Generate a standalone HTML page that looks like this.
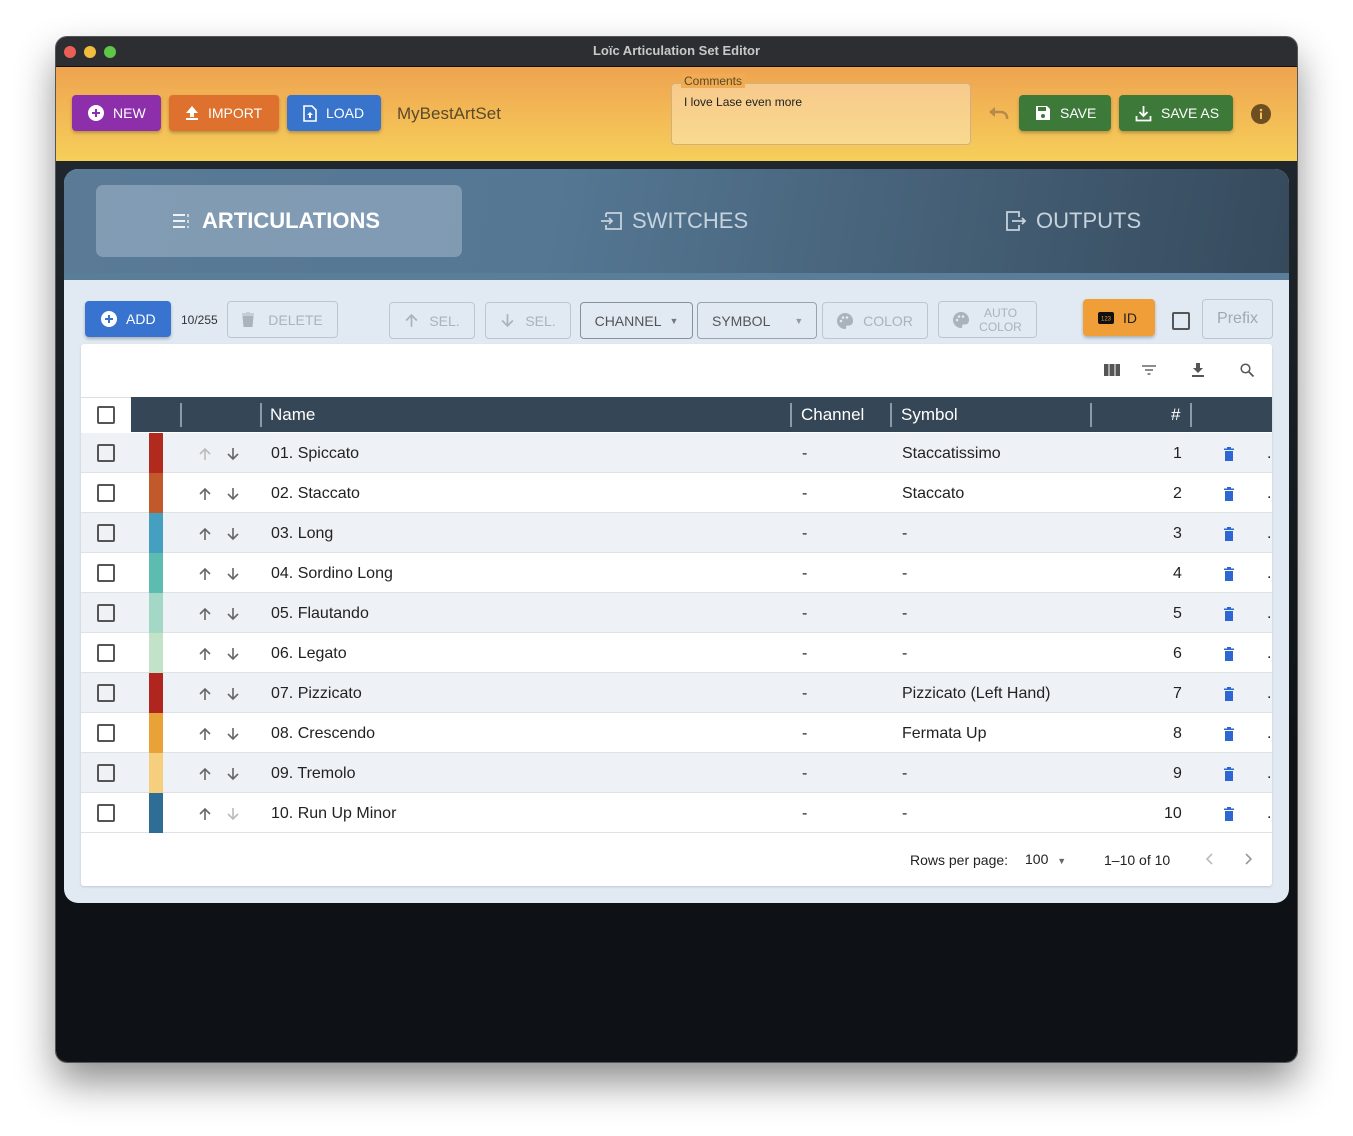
<!DOCTYPE html>
<html><head><meta charset="utf-8"><style>
*{box-sizing:border-box;margin:0;padding:0}
body{width:1353px;height:1136px;background:#fff;font-family:"Liberation Sans",Arial,sans-serif;position:relative;overflow:hidden}
.a{position:absolute}
.win{left:56px;top:37px;width:1241px;height:1025px;border-radius:11px;overflow:hidden;background:linear-gradient(#232b32,#0e1216 70%);box-shadow:0 0 0 1px #555,0 20px 40px rgba(0,0,0,.45)}
.title{left:0;top:0;width:100%;height:30px;background:#2c2e31;color:#c9c9c9;font-weight:bold;font-size:13px;text-align:center;line-height:28px;border-bottom:1px solid #111}
.dot{width:12px;height:12px;border-radius:50%;top:9px}
.tb{left:0;top:30px;width:100%;height:94px;background:linear-gradient(#efa350,#f6cf5a)}
.btn{height:36px;border-radius:4px;color:#fff;font-size:14px;display:flex;align-items:center;box-shadow:0 2px 3px rgba(0,0,0,.25);padding-left:16px}
.btn svg{margin-right:9px}
.ob{border:1px solid #bcc6cf;border-radius:4px;color:#a9b3bc;font-size:14px;display:flex;align-items:center;justify-content:center;height:37px}
.row{left:17px;width:1191px;height:40px;border-bottom:1px solid #dde2e6;font-size:16px;color:#222}
.row span{position:absolute;top:12px}
.row svg{position:absolute}
.cb{width:18px;height:18px;border:2px solid #555;border-radius:2px;position:absolute}
</style></head><body>
<svg width="0" height="0" style="position:absolute"><defs>
<symbol id="up" viewBox="0 0 14 14"><path d="M7 13V2M2 7l5-5 5 5" fill="none" stroke="currentColor" stroke-width="1.6"/></symbol>
<symbol id="dn" viewBox="0 0 14 14"><path d="M7 1v11M2 7l5 5 5-5" fill="none" stroke="currentColor" stroke-width="1.6"/></symbol>
<symbol id="tr" viewBox="0 0 10 14"><path d="M0 1.5h10v1.5H0zM3 0h4v1.5H3zM1 4h8v10H1z" fill="#2d67d1"/></symbol>
</defs></svg>
<div class="a win">
 <div class="a title">Loïc Articulation Set Editor</div>
 <div class="a dot" style="left:8px;background:#ec5f57"></div>
 <div class="a dot" style="left:28px;background:#f2bd3f"></div>
 <div class="a dot" style="left:48px;background:#5ec648"></div>
 <div class="a tb">
  <div class="a btn" style="left:16px;top:28px;width:89px;background:#8d2fab"><svg width="16" height="16" viewBox="0 0 16 16"><circle cx="8" cy="8" r="8" fill="#fff"/><path d="M8 4v8M4 8h8" stroke="#8d2fab" stroke-width="2"/></svg>NEW</div>
  <div class="a btn" style="left:113px;top:28px;width:110px;background:#dd712d"><svg width="14" height="16" viewBox="0 0 14 16"><path d="M7 1l6 7H9v4H5V8H1z" fill="#fff"/><rect x="1" y="13" width="12" height="2" fill="#fff"/></svg>IMPORT</div>
  <div class="a btn" style="left:231px;top:28px;width:94px;background:#3974cc"><svg width="14" height="17" viewBox="0 0 14 17"><path d="M1 1h8l4 4v11H1z" fill="none" stroke="#fff" stroke-width="1.6"/><path d="M7 7l3 3H8v3H6v-3H4z" fill="#fff"/></svg>LOAD</div>
  <div class="a" style="left:341px;top:37px;font-size:17px;color:#5a4a2a">MyBestArtSet</div>
  <div class="a" style="left:615px;top:16px;width:300px;height:62px;border:1px solid #d0b080;border-radius:4px;background:rgba(255,240,210,.45)"></div>
  <div class="a" style="left:625px;top:7px;font-size:12px;color:#5a4a2a;background:#f1ab52;padding:0 3px">Comments</div>
  <div class="a" style="left:628px;top:28px;font-size:12px;color:#222">I love Lase even more</div>
  <svg class="a" style="left:932px;top:39px" width="22" height="16" viewBox="0 0 22 16"><path d="M3 6h10a6 6 0 0 1 6 7" fill="none" stroke="#b88a4a" stroke-width="2.5"/><path d="M1 6l6-5v10z" fill="#b88a4a"/></svg>
  <div class="a btn" style="left:963px;top:28px;width:92px;background:#3d7a3a"><svg width="16" height="16" viewBox="0 0 16 16"><path d="M1 1h11l3 3v11H1z" fill="#fff"/><rect x="3" y="2" width="8" height="4" fill="#3d7a3a"/><circle cx="8" cy="11" r="2" fill="#3d7a3a"/></svg>SAVE</div>
  <div class="a btn" style="left:1063px;top:28px;width:114px;background:#3d7a3a"><svg width="17" height="17" viewBox="0 0 17 17"><path d="M8.5 1v10M4.5 7l4 4 4-4M1.5 11v4.5h14V11" fill="none" stroke="#fff" stroke-width="1.8"/></svg>SAVE AS</div>
  <svg class="a" style="left:1195px;top:37px" width="20" height="20" viewBox="0 0 20 20"><circle cx="10" cy="10" r="10" fill="#6d4f22"/><rect x="9" y="8.5" width="2" height="6.5" fill="#f4c35c"/><circle cx="10" cy="6" r="1.3" fill="#f4c35c"/></svg>
 </div>
 <div class="a" style="left:8px;top:132px;width:1225px;height:734px;border-radius:14px;overflow:hidden;background:#e1eaf3">
  <div class="a" style="left:0;top:0;width:100%;height:104px;background:linear-gradient(100deg,#5a7a96,#557793 40%,#364a5c)"></div>
  <div class="a" style="left:0;top:104px;width:100%;height:7px;background:#5a7d9a"></div>
  <div class="a" style="left:32px;top:16px;width:366px;height:72px;border-radius:7px;background:rgba(170,190,210,.5)"></div>
  <div class="a" style="left:108px;top:39px;font-size:22px;font-weight:bold;color:#fff;display:flex;align-items:center"><svg width="20" height="16" viewBox="0 0 20 16" style="margin-right:10px"><path d="M1 2h12M1 8h12M1 14h12" stroke="#fff" stroke-width="1.8"/><path d="M16 1v3M16 7v3M16 13v2" stroke="#fff" stroke-width="1.2"/></svg>ARTICULATIONS</div>
  <div class="a" style="left:536px;top:39px;font-size:22px;color:#c6d2dd;display:flex;align-items:center"><svg width="22" height="18" viewBox="0 0 22 18" style="margin-right:10px"><path d="M6 1h15v16H6v-4M6 5V1" fill="none" stroke="#c6d2dd" stroke-width="1.8"/><path d="M1 9h11M9 6l3 3-3 3" fill="none" stroke="#c6d2dd" stroke-width="1.8"/></svg>SWITCHES</div>
  <div class="a" style="left:941px;top:39px;font-size:22px;color:#c6d2dd;display:flex;align-items:center"><svg width="22" height="20" viewBox="0 0 22 20" style="margin-right:9px"><path d="M14 6V1H2v18h12v-5" fill="none" stroke="#c6d2dd" stroke-width="1.8"/><path d="M7 10h13M17 7l3 3-3 3" fill="none" stroke="#c6d2dd" stroke-width="1.8"/></svg>OUTPUTS</div>
  <div class="a btn" style="left:21px;top:132px;width:86px;background:#3873cf"><svg width="16" height="16" viewBox="0 0 16 16"><circle cx="8" cy="8" r="8" fill="#fff"/><path d="M8 4v8M4 8h8" stroke="#3873cf" stroke-width="2"/></svg>ADD</div>
  <div class="a" style="left:117px;top:144px;font-size:12px;color:#333">10/255</div>
  <div class="a ob" style="left:163px;top:132px;width:111px"><svg width="12" height="15" viewBox="0 0 12 15" style="margin-right:14px"><path d="M0 2h12M4 0h4M1 4h10l-1 11H2z" fill="#a9b3bc" stroke="#a9b3bc"/></svg>DELETE</div>
  <div class="a ob" style="left:325px;top:133px;width:86px"><svg width="15" height="15" style="margin-right:10px;color:#a9b3bc"><use href="#up"/></svg>SEL.</div>
  <div class="a ob" style="left:421px;top:133px;width:86px"><svg width="15" height="15" style="margin-right:10px;color:#a9b3bc"><use href="#dn"/></svg>SEL.</div>
  <div class="a ob" style="left:516px;top:133px;width:113px;border-color:#889098;color:#555">CHANNEL<span style="margin-left:8px;font-size:9px;color:#777">▼</span></div>
  <div class="a ob" style="left:633px;top:133px;width:120px;border-color:#9aa2aa;color:#555;justify-content:flex-start;padding-left:14px">SYMBOL<span style="margin-left:24px;font-size:9px;color:#999">▼</span></div>
  <div class="a ob" style="left:758px;top:133px;width:106px"><svg width="16" height="16" viewBox="0 0 16 16" style="margin-right:10px"><path d="M8 0a8 8 0 0 0 0 16c1 0 1.5-.7 1.2-1.6-.4-.9.1-1.9 1.1-1.9H12a4 4 0 0 0 4-4A8 8 0 0 0 8 0z" fill="#a9b3bc"/><circle cx="4" cy="8" r="1.3" fill="#e1eaf3"/><circle cx="6" cy="4.5" r="1.3" fill="#e1eaf3"/><circle cx="10" cy="4.5" r="1.3" fill="#e1eaf3"/></svg>COLOR</div>
  <div class="a ob" style="left:874px;top:132px;width:99px;font-size:12px;line-height:14px"><svg width="16" height="16" viewBox="0 0 16 16" style="margin-right:10px"><path d="M8 0a8 8 0 0 0 0 16c1 0 1.5-.7 1.2-1.6-.4-.9.1-1.9 1.1-1.9H12a4 4 0 0 0 4-4A8 8 0 0 0 8 0z" fill="#a9b3bc"/><circle cx="4" cy="8" r="1.3" fill="#e1eaf3"/><circle cx="6" cy="4.5" r="1.3" fill="#e1eaf3"/><circle cx="10" cy="4.5" r="1.3" fill="#e1eaf3"/></svg><span style="text-align:center">AUTO<br>COLOR</span></div>
  <div class="a btn" style="left:1019px;top:130px;width:72px;height:37px;background:#f09f38;color:#222;padding-left:15px"><svg width="16" height="12" viewBox="0 0 16 12"><rect width="16" height="12" rx="2" fill="#111"/><text x="8" y="8.5" font-size="6" fill="#f09f38" text-anchor="middle" font-family="Liberation Sans">123</text></svg>ID</div>
  <div class="cb" style="left:1108px;top:143px;border-color:#555"></div>
  <div class="a ob" style="left:1138px;top:130px;width:71px;height:40px;font-size:16px;color:#a0a8b0">Prefix</div>
  <div class="a" style="left:17px;top:175px;width:1191px;height:542px;background:#fff;border-radius:3px;box-shadow:0 1px 2px rgba(0,0,0,.15)"></div>
  <svg class="a" style="left:1040px;top:195px" width="16" height="12" viewBox="0 0 16 12"><path d="M0 0h4.5v12H0zM5.5 0h5v12h-5zM11.5 0H16v12h-4.5z" fill="#555"/></svg>
  <svg class="a" style="left:1078px;top:196px" width="14" height="10" viewBox="0 0 14 10"><path d="M0 1h14M3 5h8M5.5 9h3" stroke="#666" stroke-width="1.5"/></svg>
  <svg class="a" style="left:1128px;top:194px" width="12" height="14" viewBox="0 0 12 14"><path d="M4 0h4v5h3l-5 5-5-5h3z M0 12h12v2H0z" fill="#555"/></svg>
  <svg class="a" style="left:1176px;top:194px" width="14" height="14" viewBox="0 0 14 14"><circle cx="5.5" cy="5.5" r="4.3" fill="none" stroke="#555" stroke-width="1.5"/><path d="M9 9l4.5 4.5" stroke="#555" stroke-width="1.7"/></svg>
  <div class="a" style="left:17px;top:228px;width:1191px;height:1px;background:#ddd"></div>
  <div class="a" style="left:67px;top:228px;width:1141px;height:35px;background:#354756;color:#fff;font-size:17px">
   <div class="a" style="left:49px;top:6px;width:2px;height:24px;background:#8d99a4"></div>
   <div class="a" style="left:129px;top:6px;width:2px;height:24px;background:#8d99a4"></div>
   <div class="a" style="left:659px;top:6px;width:2px;height:24px;background:#8d99a4"></div>
   <div class="a" style="left:759px;top:6px;width:2px;height:24px;background:#8d99a4"></div>
   <div class="a" style="left:959px;top:6px;width:2px;height:24px;background:#8d99a4"></div>
   <div class="a" style="left:1059px;top:6px;width:2px;height:24px;background:#8d99a4"></div>
   <span class="a" style="left:139px;top:8px">Name</span>
   <span class="a" style="left:670px;top:8px">Channel</span>
   <span class="a" style="left:770px;top:8px">Symbol</span>
   <span class="a" style="left:1040px;top:8px">#</span>
  </div>
  <div class="cb" style="left:33px;top:237px"></div>
  <div class="a" style="left:846px;top:683px;font-size:14px;color:#222">Rows per page:</div>
  <div class="a" style="left:961px;top:682px;font-size:14px;color:#222">100 <span style="font-size:9px;color:#666;margin-left:5px">▼</span></div>
  <div class="a" style="left:1040px;top:683px;font-size:14px;color:#222">1–10 of 10</div>
  <svg class="a" style="left:1141px;top:684px" width="8" height="12" viewBox="0 0 8 12"><path d="M7 1L2 6l5 5" fill="none" stroke="#bbb" stroke-width="1.6"/></svg>
  <svg class="a" style="left:1181px;top:684px" width="8" height="12" viewBox="0 0 8 12"><path d="M1 1l5 5-5 5" fill="none" stroke="#999" stroke-width="1.6"/></svg>
 </div>
</div>
<div style="position:absolute;left:64px;top:169px">
 <div class="a row" style="top:264px;background:#eef2f6"><div class="cb" style="left:16px;top:11px"></div><div class="a" style="left:68px;top:0;width:14px;height:40px;background:#b22a1e"></div><svg width="14" height="14" style="left:117px;top:14px;color:#bbb"><use href="#up"/></svg><svg width="14" height="14" style="left:145px;top:14px;color:#666"><use href="#dn"/></svg><span style="left:190px">01. Spiccato</span><span style="left:721px">-</span><span style="left:821px">Staccatissimo</span><span style="left:1092px">1</span><svg width="10" height="14" style="left:1143px;top:14px"><use href="#tr"/></svg><span style="left:1186px">.</span></div>
 <div class="a row" style="top:304px;background:#fff"><div class="cb" style="left:16px;top:11px"></div><div class="a" style="left:68px;top:0;width:14px;height:40px;background:#c2592a"></div><svg width="14" height="14" style="left:117px;top:14px;color:#666"><use href="#up"/></svg><svg width="14" height="14" style="left:145px;top:14px;color:#666"><use href="#dn"/></svg><span style="left:190px">02. Staccato</span><span style="left:721px">-</span><span style="left:821px">Staccato</span><span style="left:1092px">2</span><svg width="10" height="14" style="left:1143px;top:14px"><use href="#tr"/></svg><span style="left:1186px">.</span></div>
 <div class="a row" style="top:344px;background:#eef2f6"><div class="cb" style="left:16px;top:11px"></div><div class="a" style="left:68px;top:0;width:14px;height:40px;background:#449fc0"></div><svg width="14" height="14" style="left:117px;top:14px;color:#666"><use href="#up"/></svg><svg width="14" height="14" style="left:145px;top:14px;color:#666"><use href="#dn"/></svg><span style="left:190px">03. Long</span><span style="left:721px">-</span><span style="left:821px">-</span><span style="left:1092px">3</span><svg width="10" height="14" style="left:1143px;top:14px"><use href="#tr"/></svg><span style="left:1186px">.</span></div>
 <div class="a row" style="top:384px;background:#fff"><div class="cb" style="left:16px;top:11px"></div><div class="a" style="left:68px;top:0;width:14px;height:40px;background:#5cbcb0"></div><svg width="14" height="14" style="left:117px;top:14px;color:#666"><use href="#up"/></svg><svg width="14" height="14" style="left:145px;top:14px;color:#666"><use href="#dn"/></svg><span style="left:190px">04. Sordino Long</span><span style="left:721px">-</span><span style="left:821px">-</span><span style="left:1092px">4</span><svg width="10" height="14" style="left:1143px;top:14px"><use href="#tr"/></svg><span style="left:1186px">.</span></div>
 <div class="a row" style="top:424px;background:#eef2f6"><div class="cb" style="left:16px;top:11px"></div><div class="a" style="left:68px;top:0;width:14px;height:40px;background:#a4d8c6"></div><svg width="14" height="14" style="left:117px;top:14px;color:#666"><use href="#up"/></svg><svg width="14" height="14" style="left:145px;top:14px;color:#666"><use href="#dn"/></svg><span style="left:190px">05. Flautando</span><span style="left:721px">-</span><span style="left:821px">-</span><span style="left:1092px">5</span><svg width="10" height="14" style="left:1143px;top:14px"><use href="#tr"/></svg><span style="left:1186px">.</span></div>
 <div class="a row" style="top:464px;background:#fff"><div class="cb" style="left:16px;top:11px"></div><div class="a" style="left:68px;top:0;width:14px;height:40px;background:#c2e3c8"></div><svg width="14" height="14" style="left:117px;top:14px;color:#666"><use href="#up"/></svg><svg width="14" height="14" style="left:145px;top:14px;color:#666"><use href="#dn"/></svg><span style="left:190px">06. Legato</span><span style="left:721px">-</span><span style="left:821px">-</span><span style="left:1092px">6</span><svg width="10" height="14" style="left:1143px;top:14px"><use href="#tr"/></svg><span style="left:1186px">.</span></div>
 <div class="a row" style="top:504px;background:#eef2f6"><div class="cb" style="left:16px;top:11px"></div><div class="a" style="left:68px;top:0;width:14px;height:40px;background:#b0261e"></div><svg width="14" height="14" style="left:117px;top:14px;color:#666"><use href="#up"/></svg><svg width="14" height="14" style="left:145px;top:14px;color:#666"><use href="#dn"/></svg><span style="left:190px">07. Pizzicato</span><span style="left:721px">-</span><span style="left:821px">Pizzicato (Left Hand)</span><span style="left:1092px">7</span><svg width="10" height="14" style="left:1143px;top:14px"><use href="#tr"/></svg><span style="left:1186px">.</span></div>
 <div class="a row" style="top:544px;background:#fff"><div class="cb" style="left:16px;top:11px"></div><div class="a" style="left:68px;top:0;width:14px;height:40px;background:#e9a237"></div><svg width="14" height="14" style="left:117px;top:14px;color:#666"><use href="#up"/></svg><svg width="14" height="14" style="left:145px;top:14px;color:#666"><use href="#dn"/></svg><span style="left:190px">08. Crescendo</span><span style="left:721px">-</span><span style="left:821px">Fermata Up</span><span style="left:1092px">8</span><svg width="10" height="14" style="left:1143px;top:14px"><use href="#tr"/></svg><span style="left:1186px">.</span></div>
 <div class="a row" style="top:584px;background:#eef2f6"><div class="cb" style="left:16px;top:11px"></div><div class="a" style="left:68px;top:0;width:14px;height:40px;background:#f5cf7e"></div><svg width="14" height="14" style="left:117px;top:14px;color:#666"><use href="#up"/></svg><svg width="14" height="14" style="left:145px;top:14px;color:#666"><use href="#dn"/></svg><span style="left:190px">09. Tremolo</span><span style="left:721px">-</span><span style="left:821px">-</span><span style="left:1092px">9</span><svg width="10" height="14" style="left:1143px;top:14px"><use href="#tr"/></svg><span style="left:1186px">.</span></div>
 <div class="a row" style="top:624px;background:#fff"><div class="cb" style="left:16px;top:11px"></div><div class="a" style="left:68px;top:0;width:14px;height:40px;background:#2e6e96"></div><svg width="14" height="14" style="left:117px;top:14px;color:#666"><use href="#up"/></svg><svg width="14" height="14" style="left:145px;top:14px;color:#bbb"><use href="#dn"/></svg><span style="left:190px">10. Run Up Minor</span><span style="left:721px">-</span><span style="left:821px">-</span><span style="left:1083px">10</span><svg width="10" height="14" style="left:1143px;top:14px"><use href="#tr"/></svg><span style="left:1186px">.</span></div>
</div>
</body></html>
